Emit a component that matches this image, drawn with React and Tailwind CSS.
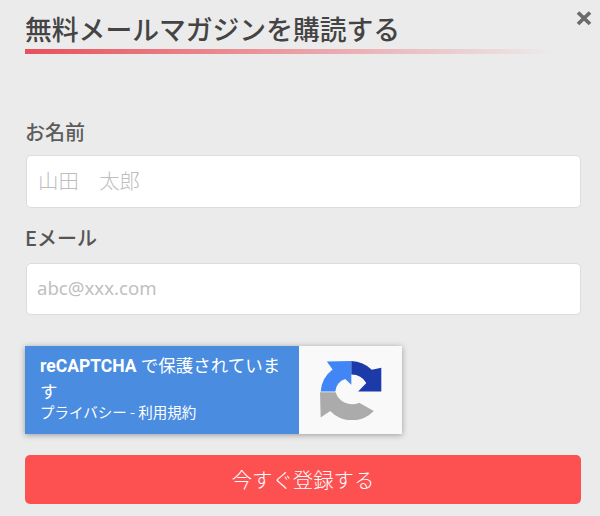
export default function App() {
  return (
    <div className="relative w-[600px] h-[516px] overflow-hidden bg-[#ebebeb] font-['Noto_Sans_CJK_JP','Noto_Sans',sans-serif] text-[#555]">
      <button className="absolute right-[7px] top-[9px] leading-none">
        <svg width="18" height="18" viewBox="0 0 18 18"><path d="M3 3.5 L15 15 M15 3.5 L3 15" stroke="#6b6b6b" strokeWidth="3.8" fill="none" /></svg>
      </button>
      <div className="pl-[25px] pr-[19px] pt-[9px]">
        <h2 className="text-[26.8px] font-medium leading-[40px] text-[#444] whitespace-nowrap">無料メールマガジンを購読する</h2>
        <div className="h-[5px] w-[530px] bg-gradient-to-r from-[#e8505b] to-transparent" />
        <label className="block mt-[64px] text-[20px] font-medium leading-[27px] text-[#5c5c5c]">お名前</label>
        <div className="mt-[10px] ml-px h-[53px] rounded-[5px] border border-[#dcdcdc] bg-white pl-[11px] pb-[3px] flex items-center text-[20.4px] font-light text-[#bdbdbd]">山田　太郎</div>
        <label className="block mt-[16px] text-[20px] font-medium leading-[27px] text-[#555]">Eメール</label>
        <div className="mt-[12px] ml-px h-[52px] rounded-[5px] border border-[#dcdcdc] bg-white pl-[10px] pb-[3px] flex items-center text-[18.6px] text-[#c0c0c0] font-['Noto_Sans',sans-serif]">abc@xxx.com</div>
        <div className="mt-[31px] flex h-[88px] w-[377px] bg-[#f9f9f9] shadow-[0_1px_6px_rgba(0,0,0,0.35)]">
          <div className="w-[274px] bg-[#4a8ce0] pl-[15px] pt-[8px] text-white">
            <div className="text-[17.5px] leading-[25px] whitespace-nowrap font-['Roboto','Noto_Sans_CJK_JP',sans-serif]"><span className="font-bold">reCAPTCHA</span><span> で保護されていま</span></div>
            <div className="text-[17.5px] leading-[22px] mt-px">す</div>
            <div className="text-[14.5px] leading-[20px]">プライバシー - 利用規約</div>
          </div>
          <div className="flex flex-1 items-center justify-center pl-[2px] pb-[1px]">
            <svg width="63" height="60" viewBox="120 58 185 175">
              <path d="M212 60 L212 130 L194 113 A40 40 0 0 0 165 150 L122 150 A88 88 0 0 1 157 85 L140 62 Z" fill="#4285f4" />
              <path d="M212 60 A88 88 0 0 1 272 86 L300 80 L300 150 L232 150 L256 125 A50 50 0 0 0 212 100 Z" fill="#1c3aa9" />
              <path d="M120 152 L166 152 A50 50 0 0 0 235 183 L278 207 A88 88 0 0 1 150 207 L122 226 Z" fill="#ababab" />
            </svg>
          </div>
        </div>
        <button className="mt-[21px] flex h-[49px] w-[556px] items-center justify-center rounded-[5px] bg-[#fd5050] pb-[1px] text-[20.4px] font-light text-white">今すぐ登録する</button>
      </div>
    </div>
  );
}
